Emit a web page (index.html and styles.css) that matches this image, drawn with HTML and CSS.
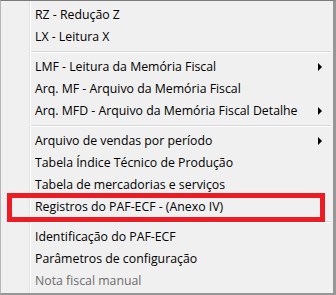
FILE: index.html
```html
<!DOCTYPE html>
<html lang="pt-BR">
<head>
    <meta charset="UTF-8">
    <title>Menu PAF-ECF</title>
    <link rel="stylesheet" href="styles.css">
</head>
<body>
    <div class="menu">
        <div class="item">RZ - Redução Z</div>
        <div class="item">LX - Leitura X</div>
        <div class="sep"></div>
        <div class="item sub">LMF - Leitura da Memória Fiscal</div>
        <div class="item">Arq. MF - Arquivo da Memória Fiscal</div>
        <div class="item sub">Arq. MFD - Arquivo da Memória Fiscal Detalhe</div>
        <div class="sep"></div>
        <div class="item sub">Arquivo de vendas por período</div>
        <div class="item">Tabela Índice Técnico de Produção</div>
        <div class="item">Tabela de mercadorias e serviços</div>
        <div class="item marked">Registros do PAF-ECF - (Anexo IV)</div>
        <div class="sep"></div>
        <div class="item">Identificação do PAF-ECF</div>
        <div class="item">Parâmetros de configuração</div>
        <div class="item disabled">Nota fiscal manual</div>
    </div>
</body>
</html>
```

FILE: styles.css
```css
body {
    margin: 0;
    padding: 0;
    font-family: "Open Sans", "Noto Sans", sans-serif;
    font-size: 12.3px;
}
.menu {
    width: 336px;
    height: 295px;
    box-sizing: border-box;
    background-color: #f0f0f0;
    border-top: 1px solid #7a7a7a;
    border-left: 1px solid #b5b5b5;
    border-right: 3px solid #979797;
    border-bottom: 2px solid #979797;
    padding: 3px 0 0 0;
    display: flex;
    flex-direction: column;
    background-image: linear-gradient(to right, transparent 28px, #e2e2e2 28px, #e2e2e2 29px, #ffffff 29px, #ffffff 30px, transparent 30px);
}
.item {
    position: relative;
    height: 22px;
    line-height: 22px;
    padding-left: 34px;
    color: #000;
    white-space: nowrap;
}
.item.sub::after {
    content: "";
    position: absolute;
    right: 11px;
    top: 7px;
    border-left: 4px solid #000;
    border-top: 4px solid transparent;
    border-bottom: 4px solid transparent;
}
.item.disabled {
    color: #6d6d6d;
}
.item.marked::before {
    content: "";
    position: absolute;
    left: 6px;
    right: 8px;
    top: -3px;
    bottom: -4px;
    border: 5px solid #ed1c24;
}
.sep {
    height: 8px;
    margin-left: 30px;
    margin-right: 2px;
    background-image: linear-gradient(to bottom, transparent 3px, #d7d7d7 3px, #d7d7d7 4px, #ffffff 4px, #ffffff 5px, transparent 5px);
}
```
